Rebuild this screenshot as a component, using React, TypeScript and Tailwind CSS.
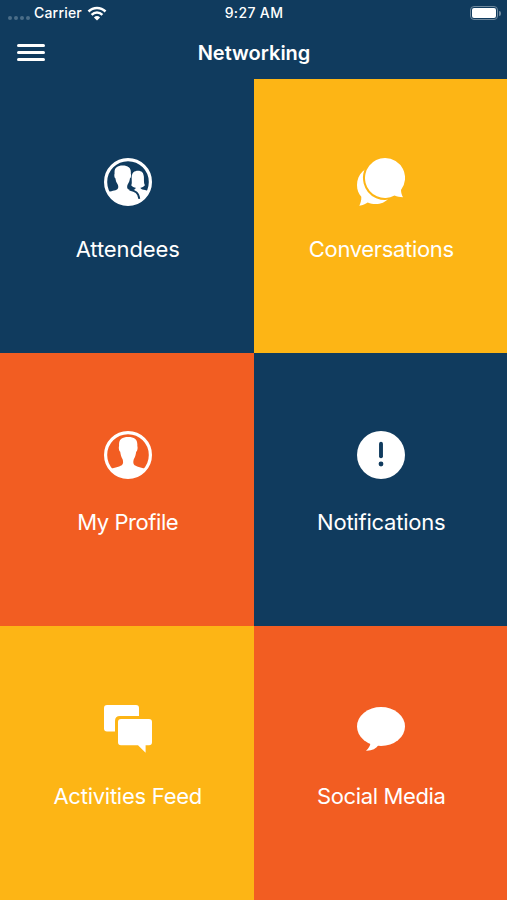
import React from "react";

const AttendeesIcon: React.FC = () => (
  <svg viewBox="0 0 48 48" className="size-12" fill="white">
    <clipPath id="attendees">
      <circle cx="24" cy="24" r="23" />
    </clipPath>
    <circle cx="24" cy="24" r="22.4" fill="none" stroke="white" strokeWidth="3.2" />
    <g clipPath="url(#attendees)">
      <path d="M3 34.600C7 33 11.500 32.700 13.300 31.300C14.700 30.200 14.400 28 13.600 26.300C12.300 24.500 11.700 22.500 11.400 20.300C10.400 19.600 10 16.800 10.600 15.600C10 10 13 7.500 18.700 7.500C24.400 7.500 27.400 10 26.800 15.600C27.400 16.800 27 19.600 26 20.300C25.700 22.500 25.100 24.500 23.800 26.300C23 28 22.700 30.200 24.100 31.300L28 32.500C30 31.900 31.600 31.500 31.700 29.800C30 29.500 28.300 28.700 27.200 27.200C28.300 25.500 27.500 22 27.700 18.800C27.900 14.700 30.300 12.700 34 12.700C37.700 12.700 39.600 14.700 39.900 18.800C40.100 22 39.600 25.500 40.900 27.200C39.700 28.700 38 29.500 36.500 29.800C36.600 32 41.500 31.800 46 33.500V48H2Z" />
      <path
        d="M25.500 31.700C31 33 34.600 34 35.300 40.800"
        fill="none"
        stroke="#103b5e"
        strokeWidth="1.8"
      />
    </g>
  </svg>
);

const ConversationsIcon: React.FC = () => (
  <svg viewBox="0 0 48 48" className="size-12" fill="white">
    <path d="M19 8C8.500 8 0 16.500 0 27C0 32 1.500 35.500 4.300 38.700C4.500 42 3.600 45 2.300 47.800C5.800 47.300 8.500 46 10.700 44.500C18 47.400 26.500 46.600 32 40L38 27Z" />
    <path
      d="M28 0A20 20 0 1 0 37.500 37.600C40 38.500 43 39.200 46 39.300C44.700 37 44.100 35 44 32.100A20 20 0 0 0 28 0Z"
      stroke="#fdb515"
      strokeWidth="4"
    />
    <path d="M28 0A20 20 0 1 0 37.500 37.600C40 38.500 43 39.200 46 39.300C44.700 37 44.100 35 44 32.100A20 20 0 0 0 28 0Z" />
  </svg>
);

const ProfileIcon: React.FC = () => (
  <svg viewBox="0 0 48 48" className="size-12" fill="white">
    <clipPath id="profile">
      <circle cx="24" cy="24" r="23" />
    </clipPath>
    <circle cx="24" cy="24" r="22.4" fill="none" stroke="white" strokeWidth="3.2" />
    <path
      clipPath="url(#profile)"
      d="M4 39.200C9 36.500 15 36 17.800 34.200C19.400 33 19.300 30.500 18.600 28.200C17.200 26 16.600 23.500 16.200 20.800C15 20 14.400 16.500 15.100 15.100C14.500 8.500 17.800 6 24.200 6C30.600 6 33.900 8.500 33.300 15.100C34 16.500 33.400 20 32.200 20.800C31.800 23.500 31.200 26 29.800 28.200C29.100 30.500 29 33 30.600 34.200C33.400 36 39 36.500 44 39.200V48H4Z"
    />
  </svg>
);

const NotificationsIcon: React.FC = () => (
  <svg viewBox="0 0 48 48" className="size-12">
    <circle cx="24" cy="24" r="24" fill="white" />
    <path d="M24 12.800V25.300" stroke="#103b5e" strokeWidth="3.900" strokeLinecap="round" />
    <circle cx="24" cy="33" r="2.400" fill="#103b5e" />
  </svg>
);

const ActivitiesIcon: React.FC = () => (
  <svg viewBox="0 0 48 48" className="size-12" fill="white">
    <path d="M3 0H32Q35 0 35 3V11H16Q11 11 11 16V26.500H3Q0 26.500 0 23.500V3Q0 0 3 0Z" />
    <path d="M17 14H45Q48 14 48 17V37.300Q48 40.300 45 40.300H41.600V47.800L34 40.300H17Q14 40.300 14 37.300V17Q14 14 17 14Z" />
  </svg>
);

const SocialIcon: React.FC = () => (
  <svg viewBox="0 0 48 48" className="size-12" fill="white">
    <ellipse cx="24" cy="21.500" rx="24" ry="19.500" />
    <path d="M13.500 37.500C13.300 41 11.500 43.500 9 45.700C14.500 46 19 43.800 22 39.500Z" />
  </svg>
);

const tiles = [
  { label: "Attendees", icon: AttendeesIcon, bg: "bg-[#103b5e]", tracking: "tracking-[-0.1px]" },
  { label: "Conversations", icon: ConversationsIcon, bg: "bg-[#fdb515]", tracking: "tracking-[-0.34px]" },
  { label: "My Profile", icon: ProfileIcon, bg: "bg-[#f25d22]", tracking: "tracking-[-0.43px]" },
  { label: "Notifications", icon: NotificationsIcon, bg: "bg-[#103b5e]", tracking: "tracking-[-0.22px]" },
  { label: "Activities Feed", icon: ActivitiesIcon, bg: "bg-[#fdb515]", tracking: "tracking-[-0.25px]" },
  { label: "Social Media", icon: SocialIcon, bg: "bg-[#f25d22]", tracking: "tracking-[-0.38px]" },
];

const StatusBar: React.FC = () => (
  <div className="grid h-[26px] grid-cols-3 items-center pr-[6px] pl-2 text-sm leading-none font-medium">
    <div className="flex items-center">
      <div className="mt-[9px] flex gap-[2px]">
        <span className="size-1 rounded-full bg-[#4b6d88]" />
        <span className="size-1 rounded-full bg-[#4b6d88]" />
        <span className="size-1 rounded-full bg-[#4b6d88]" />
        <span className="size-1 rounded-full bg-[#4b6d88]" />
      </div>
      <span className="ml-1 tracking-[0.2px]">Carrier</span>
      <svg viewBox="0 0 20 15" className="ml-[5px] h-[15px] w-5" fill="none" stroke="white">
        <path d="M1.500 5.500C6.300 0.700 13.700 0.700 18.500 5.500" strokeWidth="2.500" />
        <path d="M4.600 8.800C7.700 5.800 12.300 5.800 15.400 8.800" strokeWidth="2.500" />
        <path d="M10 14.500L6.900 11.400Q10 8.700 13.100 11.400Z" fill="white" stroke="none" />
      </svg>
    </div>
    <span className="pr-px text-center tracking-[0.35px]">9:27 AM</span>
    <div className="flex items-center justify-end">
      <div className="flex h-[14px] w-7 rounded-[4px] border border-[#6f899e] p-px">
        <span className="grow rounded-[2px] bg-white" />
      </div>
      <span className="ml-px h-[5px] w-[2px] rounded-r-full bg-[#6f899e]" />
    </div>
  </div>
);

const App: React.FC = () => {
  return (
    <div className="flex h-[900px] w-[507px] flex-col bg-[#103b5e] font-['Inter',sans-serif] text-white">
      <header className="h-[79px] shrink-0">
        <StatusBar />
        <div className="grid h-[53px] grid-cols-[1fr_auto_1fr] items-center pr-4 pl-[17px]">
          <button className="flex w-7 flex-col gap-[4.500px]">
            <span className="h-[2.500px] w-full rounded-full bg-white" />
            <span className="h-[2.500px] w-full rounded-full bg-white" />
            <span className="h-[2.500px] w-full rounded-full bg-white" />
          </button>
          <h1 className="text-xl font-semibold">Networking</h1>
        </div>
      </header>
      <main className="grid grow grid-cols-2 grid-rows-3">
        {tiles.map(({ label, icon: Icon, bg, tracking }) => (
          <button key={label} className={`flex flex-col items-center pt-[78.500px] pl-[2px] ${bg}`}>
            <Icon />
            <span className={`mt-[29px] text-[22px] leading-7 whitespace-nowrap ${tracking}`}>
              {label}
            </span>
          </button>
        ))}
      </main>
    </div>
  );
};

export default App;
